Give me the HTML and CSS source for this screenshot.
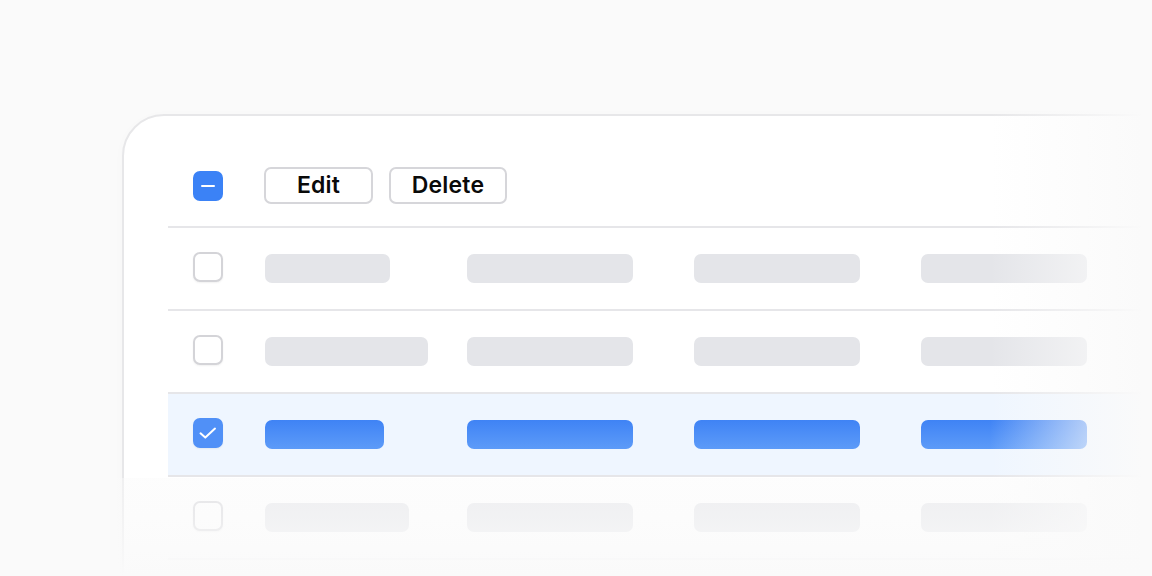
FILE: index.html
```html
<!DOCTYPE html>
<html lang="en">
<head>
<meta charset="utf-8">
<title>Table selection</title>
<link rel="stylesheet" href="styles.css">
</head>
<body>
<div class="stage">
  <div class="card">
    <div class="toolbar">
      <span class="cb cb-indeterminate"><span class="dash"></span></span>
      <button class="btn btn-edit">Edit</button>
      <button class="btn btn-delete">Delete</button>
    </div>
    <div class="rows">
      <div class="row">
        <span class="cb"></span>
        <span class="bar" style="width:125px"></span>
        <span class="bar"></span>
        <span class="bar"></span>
        <span class="bar"></span>
      </div>
      <div class="row">
        <span class="cb"></span>
        <span class="bar" style="width:163px"></span>
        <span class="bar"></span>
        <span class="bar"></span>
        <span class="bar"></span>
      </div>
      <div class="row row-selected">
        <span class="cb cb-checked">
          <svg width="20" height="20" viewBox="0 0 20 20"><path d="M2.5 10.3 L7.3 14.6 L17 5.6" fill="none" stroke="#fff" stroke-width="2" stroke-linecap="round" stroke-linejoin="round"/></svg>
        </span>
        <span class="bar" style="width:119px"></span>
        <span class="bar"></span>
        <span class="bar"></span>
        <span class="bar"></span>
      </div>
      <div class="row row-faint">
        <span class="cb"></span>
        <span class="bar" style="width:144px"></span>
        <span class="bar"></span>
        <span class="bar"></span>
        <span class="bar"></span>
      </div>
    </div>
  </div>
  <div class="fade-right"></div>
  <div class="fade-bottom"></div>
</div>
</body>
</html>
```

FILE: styles.css
```css
* { box-sizing: border-box; }

html, body {
  margin: 0;
  padding: 0;
  background: #fafafa;
  font-family: Inter, "Liberation Sans", sans-serif;
}

.stage {
  position: relative;
  width: 1152px;
  height: 576px;
  overflow: hidden;
  padding: 114px 0 0 122px;
}

.card {
  width: 1120px;
  height: 560px;
  background: #fff;
  border: 2px solid #e7e7e9;
  border-radius: 42px;
  padding: 51px 0 0 44px;
  box-shadow: 0 2px 12px rgba(0, 0, 0, 0.02);
}

.toolbar {
  display: flex;
  align-items: center;
  gap: 16px;
  padding: 0 0 22px 25px;
  border-bottom: 2px solid #e6e6e9;
  height: 61px;
}

.toolbar .cb { margin-right: 25px; }

.btn {
  height: 37px;
  padding: 0;
  border: 2px solid #d6d6da;
  border-radius: 7px;
  background: #fff;
  font-family: Inter, "Liberation Sans", sans-serif;
  font-size: 23px;
  font-weight: 600;
  color: #0a0a0a;
  line-height: 1;
  letter-spacing: 0.2px;
}

.btn-edit { width: 109px; }
.btn-delete { width: 118px; }

.cb {
  display: flex;
  align-items: center;
  justify-content: center;
  width: 30px;
  height: 30px;
  border: 2px solid #d4d4d8;
  border-radius: 7px;
  background: #fff;
  box-shadow: 0 1px 2px rgba(0, 0, 0, 0.06);
}

.cb-indeterminate {
  background: #3b82f6;
  border-color: #3b82f6;
  box-shadow: none;
}

.dash {
  width: 14px;
  height: 2px;
  border-radius: 1px;
  background: #fff;
}

.cb-checked {
  background: #5090f7;
  border-color: #5090f7;
}

.rows { display: flex; flex-direction: column; }

.row {
  display: grid;
  grid-template-columns: 30px 160px 185px 185px 166px;
  column-gap: 42px;
  align-items: center;
  height: 83px;
  padding-left: 25px;
  border-bottom: 2px solid #e6e6e9;
}

.row .cb { margin-top: -3px; }

.bar {
  display: block;
  width: 166px;
  height: 29px;
  border-radius: 7px;
  background: #e4e5e9;
}

.row-selected {
  background: #eff6ff;
}

.row-selected .bar {
  background: linear-gradient(180deg, #3f83f5 0%, #5d9bf8 100%);
}

.row-faint { border-bottom-color: #f0f0f2; }

.fade-right {
  position: absolute;
  top: 0;
  right: 0;
  bottom: 0;
  width: 162px;
  background: linear-gradient(90deg, rgba(250, 250, 250, 0) 0%, rgba(250, 250, 250, 0.62) 60%, #fafafa 94%);
  pointer-events: none;
}

.fade-bottom {
  position: absolute;
  left: 0;
  right: 0;
  bottom: 0;
  height: 98px;
  background: linear-gradient(180deg, rgba(250, 250, 250, 0.45) 0%, rgba(250, 250, 250, 0.6) 40%, rgba(250, 250, 250, 0.85) 80%, #fafafa 100%);
  pointer-events: none;
}
```
